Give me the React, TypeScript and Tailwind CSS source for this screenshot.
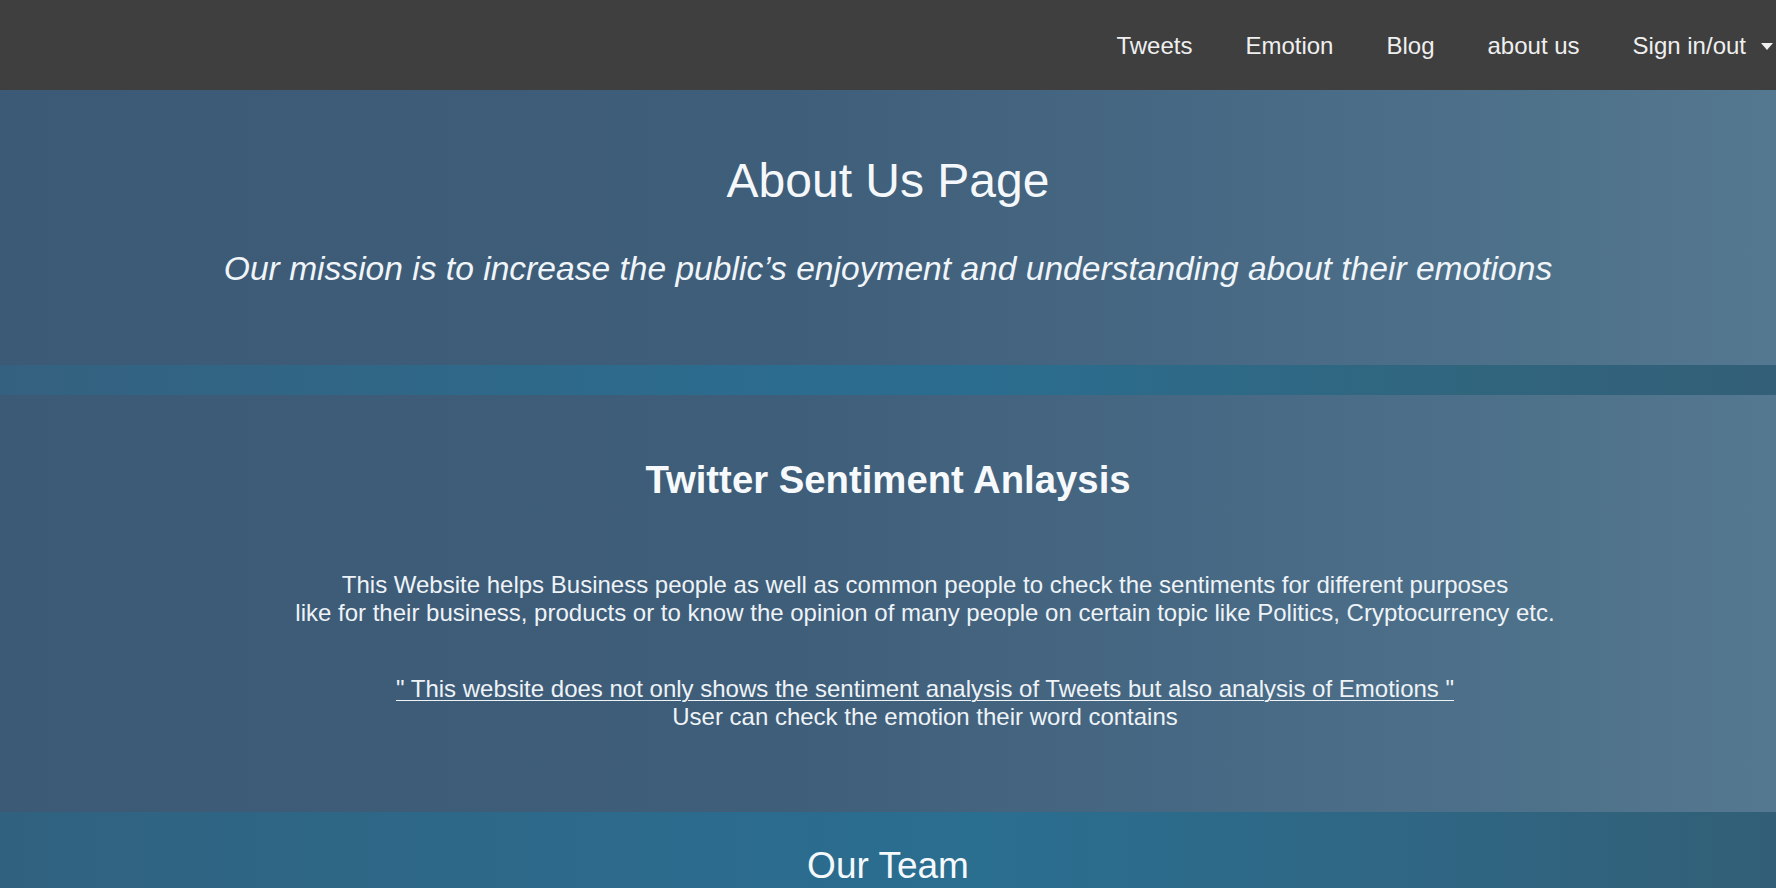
import React from "react";

const navItems = ["Tweets", "Emotion", "Blog", "about us"];

export default function App() {
  return (
    <div className="min-h-screen w-full bg-[#2f6787] font-['Liberation_Sans',Arial,sans-serif] text-white">
      <nav className="flex h-[90px] items-center justify-end bg-[#3f3f3f] pr-[3px] pt-[2px]">
        <ul className="flex items-center gap-[53px] text-[24px] text-[#efefef]">
          {navItems.map((n) => (
            <li key={n} className="cursor-pointer">
              {n}
            </li>
          ))}
          <li className="flex cursor-pointer items-center">
            <span>Sign in/out</span>
            <svg className="ml-[15px]" width="12" height="7" viewBox="0 0 12 7">
              <path d="M0 0 L12 0 L6 7 Z" fill="#efefef" />
            </svg>
          </li>
        </ul>
      </nav>

      <section className="h-[275px] bg-[linear-gradient(to_right,#3c5a75_0%,#3f5e7a_45%,#4a6c87_75%,#54788f_100%)] pt-[63px] text-center">
        <h1 className="text-[48px] leading-[55px] text-[#f5f8fb]">About Us Page</h1>
        <p className="mt-[42px] text-[33.6px] italic leading-[38px] text-[#f0f5f9]">
          Our mission is to increase the public’s enjoyment and understanding about their emotions
        </p>
      </section>

      <div className="h-[30px] bg-[linear-gradient(to_right,#34617f_0%,#2c6b8d_40%,#2b6d8f_55%,#30667f_80%,#335f78_100%)]" />

      <section className="h-[417px] bg-[linear-gradient(to_right,#3c5a75_0%,#3f5e7a_45%,#4a6c87_75%,#54788f_100%)] pt-[63px] text-center">
        <h2 className="text-[38.3px] font-bold leading-[44px] text-[#f7fafc]">Twitter Sentiment Anlaysis</h2>
        <p className="mt-[69px] pl-[74px] text-[24px] leading-[28px] text-[#eef3f7]">
          This Website helps Business people as well as common people to check the sentiments for different purposes
          <br />
          like for their business, products or to know the opinion of many people on certain topic like Politics, Cryptocurrency etc.
        </p>
        <p className="mt-[48px] pl-[74px] text-[24px] leading-[28px] text-[#eef3f7]">
          <span className="underline decoration-1 underline-offset-[3px]">
            " This website does not only shows the sentiment analysis of Tweets but also analysis of Emotions "
          </span>
          <br />
          User can check the emotion their word contains
        </p>
      </section>

      <section className="h-[120px] bg-[linear-gradient(to_right,#30627f_0%,#2c6b8d_40%,#2a6e90_55%,#2f6683_80%,#325f77_100%)] pt-[33px] text-center">
        <h2 className="text-[37px] leading-[42px] text-[#f5f9fc]">Our Team</h2>
      </section>
    </div>
  );
}
